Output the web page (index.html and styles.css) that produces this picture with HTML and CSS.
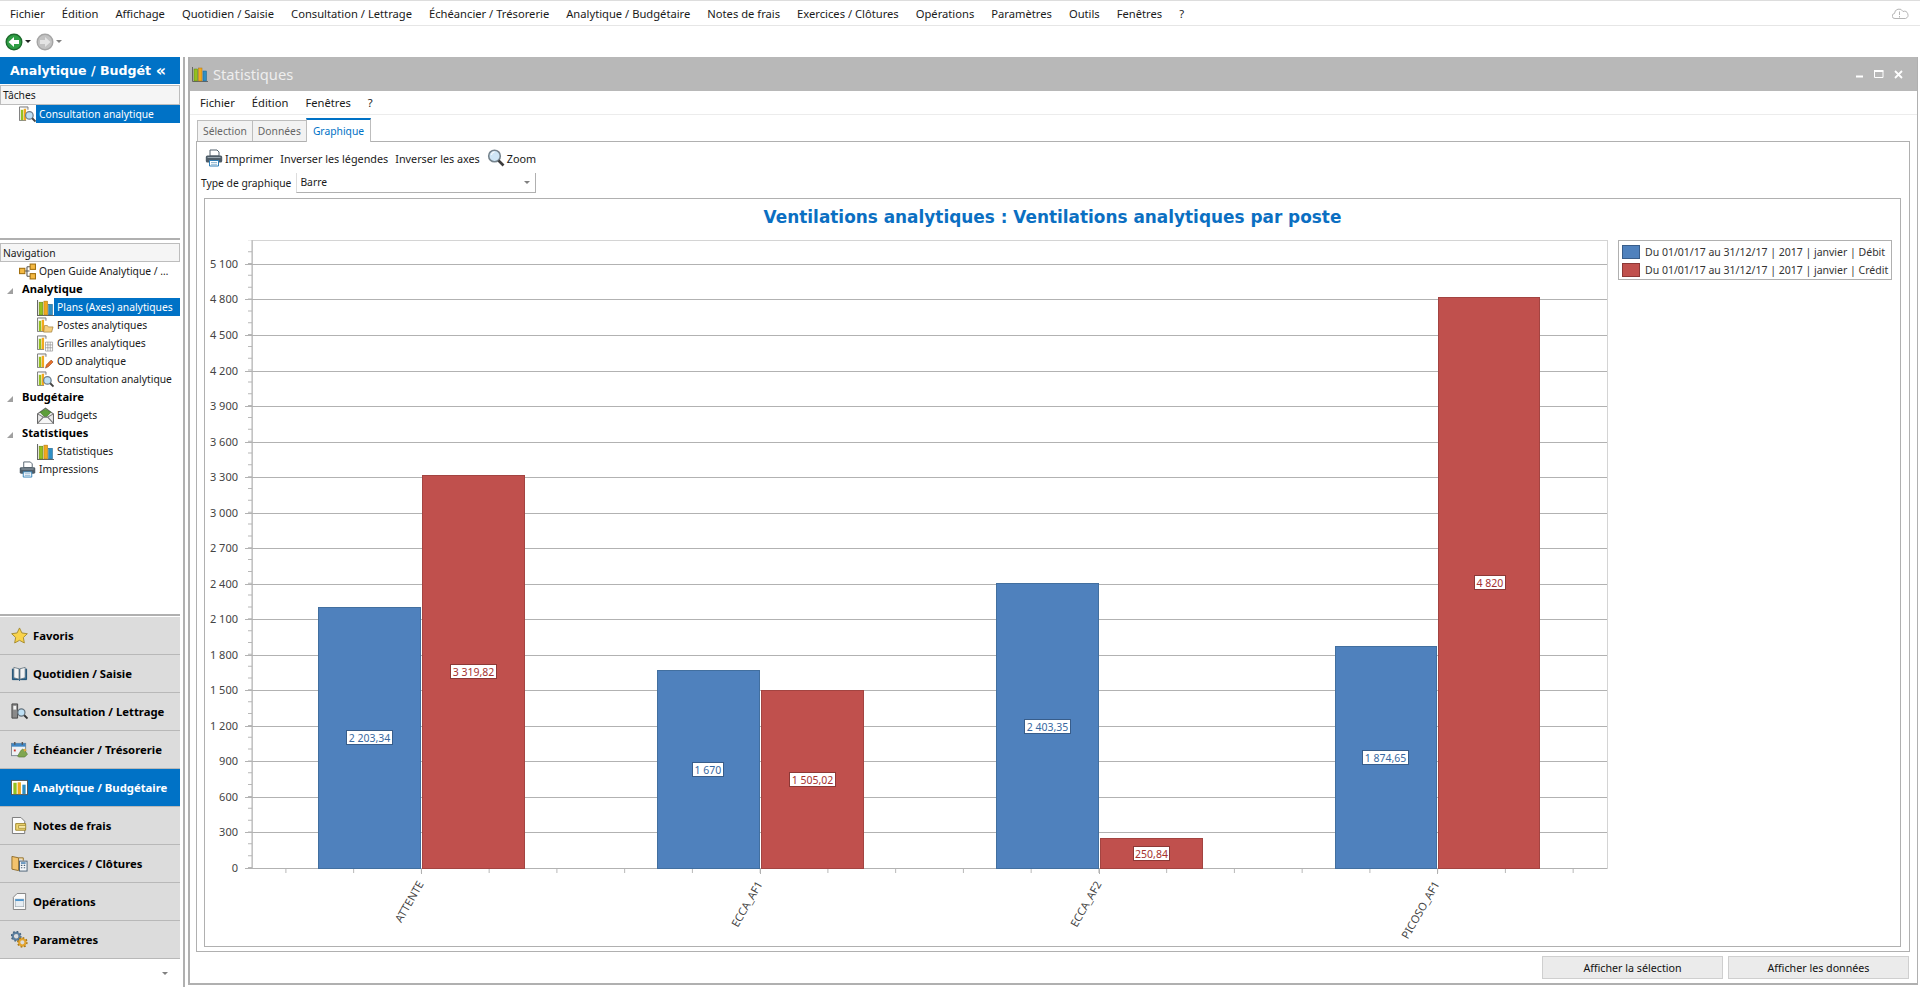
FILE: index.html
```html
<!DOCTYPE html>
<html lang="fr">
<head>
    <meta charset="utf-8">
    <title>Statistiques</title>
    <link rel="stylesheet" href="styles.css">
</head>
<body>
    <!-- Icons -->
    <svg class="sprite" xmlns="http://www.w3.org/2000/svg">
        <symbol id="i-bars" viewBox="0 0 16 16">
            <path d="M.5 1v14.5H16" fill="none" stroke="#666"/>
            <rect x="2" y="3" width="3.5" height="12" fill="#94c11f" stroke="#5d7f10" stroke-width=".5"/>
            <rect x="6.5" y="2" width="3.5" height="13" fill="#f2a81d" stroke="#a87410" stroke-width=".5"/>
            <rect x="11" y="5" width="3.5" height="10" fill="#2f8fc4" stroke="#1c6189" stroke-width=".5"/>
        </symbol>
        <symbol id="i-bars-base" viewBox="0 0 16 16">
            <path d="M.5 1h9v3M.5 1v14.5h7" fill="#eee" stroke="#777"/>
            <rect x="2" y="4" width="2.5" height="11" fill="#94c11f"/>
            <rect x="5" y="3" width="2.5" height="12" fill="#f2a81d"/>
        </symbol>
        <symbol id="i-bars-search" viewBox="0 0 18 18">
            <use href="#i-bars-base" width="16" height="16"/>
            <circle cx="11" cy="10" r="4" fill="#bfe0f5" stroke="#6d7c88" stroke-width="1.3"/>
            <path d="M14 13l3.5 3.5" stroke="#444" stroke-width="2"/>
        </symbol>
        <symbol id="i-bars-folder" viewBox="0 0 18 18">
            <use href="#i-bars-base" width="16" height="16"/>
            <path d="M8 9h3l1 1.5h5l-1.5 5.5H7z" fill="#f5cf7e" stroke="#9c7a32" stroke-width=".7"/>
        </symbol>
        <symbol id="i-bars-grid" viewBox="0 0 18 18">
            <use href="#i-bars-base" width="16" height="16"/>
            <path d="M9 7.5h7.5V17H9zM9 10.500h7.5M9 13.500h7.5M11.500 7.500V17M14 7.500V17" fill="#fff" stroke="#8a8a8a" stroke-width=".7"/>
        </symbol>
        <symbol id="i-bars-pen" viewBox="0 0 18 18">
            <use href="#i-bars-base" width="16" height="16"/>
            <path d="M9 16l1-3.500 5-5 2 2-5 5z" fill="#e8702a" stroke="#8d3f12" stroke-width=".6"/>
        </symbol>
        <symbol id="i-guide" viewBox="0 0 16 16">
            <path d="M5 7.500h5M7.500 3.500v9M7.500 3.500h3M7.500 12.500h3" fill="none" stroke="#555"/>
            <rect x=".5" y="5" width="5" height="5" fill="#f5b942" stroke="#a2700f"/>
            <rect x="10.500" y="1" width="5" height="5" fill="#f5b942" stroke="#a2700f"/>
            <rect x="10.500" y="10" width="5" height="5" fill="#f5b942" stroke="#a2700f"/>
        </symbol>
        <symbol id="i-mail" viewBox="0 0 16 16">
            <path d="M.5 6.500L8 1l7.500 5.500v9H.5z" fill="#e9e9e9" stroke="#666"/>
            <path d="M3 5l5-3 5 3-5 5z" fill="#5d9e3a" stroke="#3a6f20" stroke-width=".6"/>
            <path d="M.5 15.500L6 9.500h4l5.500 6M.5 6.500L6 9.500M15.500 6.500L10 9.500" fill="#f6f6f6" stroke="#777"/>
        </symbol>
        <symbol id="i-print" viewBox="0 0 18 18">
            <path d="M5 1h7l2 2v4H5z" fill="#fff" stroke="#54636f"/>
            <rect x=".8" y="6.500" width="16.400" height="7" rx="1.500" fill="#4f5d68"/>
            <path d="M2.500 8.500h13" stroke="#9aa7b0"/>
            <path d="M4.500 11.500h9V17h-9z" fill="#fff" stroke="#2f7fb8"/>
            <path d="M6 13.500h6M6 15.300h6" stroke="#7aa8c8" stroke-width=".8"/>
        </symbol>
        <symbol id="i-zoom" viewBox="0 0 18 18">
            <circle cx="7.500" cy="7" r="5.800" fill="#cfe6f6" stroke="#75838d" stroke-width="1.600"/>
            <path d="M4.500 6a3 3 0 0 1 3-3" fill="none" stroke="#fff"/>
            <path d="M11.500 11.500l5 5" stroke="#3d3d3d" stroke-width="2.600"/>
        </symbol>
        <symbol id="i-star" viewBox="0 0 18 18">
            <path d="M9 1l2.500 5.300 5.800.8-4.200 4 1 5.800L9 14.100l-5.100 2.800 1-5.800-4.200-4 5.800-.8z" fill="#f9d34c" stroke="#a58a2d"/>
        </symbol>
        <symbol id="i-book" viewBox="0 0 18 18">
            <path d="M1.500 4v11.500H8l1 1 1-1h6.500V4" fill="#2e6f9e" stroke="#1e4c6e"/>
            <path d="M3 2.500l5.500 1.500v11L3 13.500zM15 2.500L9.500 4v11l5.500-1.500z" fill="#f3f3f3" stroke="#5a6a75" stroke-width=".8"/>
        </symbol>
        <symbol id="i-binder" viewBox="0 0 18 18">
            <path d="M1 1h6v15H1z" fill="#8a8a8a" stroke="#444"/>
            <rect x="2.500" y="3" width="3" height="4" fill="#f4f4f4"/>
            <circle cx="11" cy="10" r="3.800" fill="#bfe0f5" stroke="#64727c" stroke-width="1.300"/>
            <path d="M14 13l3.500 3.500" stroke="#333" stroke-width="2"/>
        </symbol>
        <symbol id="i-calendar" viewBox="0 0 18 18">
            <rect x=".5" y="2.500" width="15" height="13" fill="#eef1f4" stroke="#7b8793"/>
            <rect x=".5" y="2.500" width="15" height="3.500" fill="#3f86c4"/>
            <path d="M4 1v3M12 1v3" stroke="#555" stroke-width="1.500"/>
            <rect x="3" y="9" width="2" height="2" fill="#c8382f"/>
            <path d="M7 16l3.500-6 2-1.500 2 1.500 3 4-3 3H8z" fill="#7fa650" stroke="#4e6f2c" stroke-width=".6"/>
            <path d="M13 9l2-1 1.500 2-2 1.500z" fill="#e2a93f"/>
        </symbol>
        <symbol id="i-bars-white" viewBox="0 0 18 18">
            <rect x=".5" y="1.500" width="17" height="15" fill="#fff" stroke="#555"/>
            <rect x="2.500" y="4" width="3.500" height="12" fill="#94c11f"/>
            <rect x="7" y="3.500" width="3.500" height="12.500" fill="#f2a81d"/>
            <rect x="12" y="6" width="3.500" height="10" fill="#2f8fc4"/>
        </symbol>
        <symbol id="i-note" viewBox="0 0 18 18">
            <path d="M1.500.5h9l4 4v13h-13z" fill="#fbfbfb" stroke="#777"/>
            <path d="M5 7h10.500v7H5z" fill="#f1d772" stroke="#9b8327"/>
            <path d="M8 9h7.500v3H8z" fill="#f8e9a8" stroke="#9b8327" stroke-width=".7"/>
        </symbol>
        <symbol id="i-year" viewBox="0 0 18 18">
            <path d="M1 1.500l7 1.500v13.500l-7-1.500z" fill="#f3c36d" stroke="#8f6d2c"/>
            <path d="M8 3h5v3" fill="#fbe3ad" stroke="#8f6d2c"/>
            <rect x="9" y="6.500" width="8" height="10.500" fill="#f5f7fa" stroke="#4a6075"/>
            <path d="M10.500 8.500h5" stroke="#3a76ab" stroke-width="1.500"/>
            <path d="M10.500 11h1.500M13.500 11H15M10.500 13.500h1.500M13.500 13.500H15" stroke="#4a6075" stroke-width="1.200"/>
        </symbol>
        <symbol id="i-oper" viewBox="0 0 18 18">
            <path d="M2.500 4.500l4-4h9v17h-13z" fill="#fafafa" stroke="#7f7f7f"/>
            <rect x="4.500" y="6.500" width="9" height="8" fill="#e7edf2" stroke="#9aa7b0" stroke-width=".7"/>
            <rect x="4.500" y="6.500" width="9" height="2" fill="#4f95cc"/>
        </symbol>
        <symbol id="i-gears" viewBox="0 0 18 18">
            <circle cx="5.500" cy="5.500" r="3.600" fill="none" stroke="#5d7f9e" stroke-width="2.400"/>
            <circle cx="5.500" cy="5.500" r="5" fill="none" stroke="#41627f" stroke-width="1.500" stroke-dasharray="1.800 2.100"/>
            <circle cx="12" cy="12" r="3.400" fill="none" stroke="#e3a42d" stroke-width="2.400"/>
            <circle cx="12" cy="12" r="4.900" fill="none" stroke="#a87410" stroke-width="1.500" stroke-dasharray="1.800 2"/>
        </symbol>
    </svg>

    <!-- Main menu -->
    <nav class="menubar">
        <span>Fichier</span>
        <span>Édition</span>
        <span>Affichage</span>
        <span>Quotidien / Saisie</span>
        <span>Consultation / Lettrage</span>
        <span>Échéancier / Trésorerie</span>
        <span>Analytique / Budgétaire</span>
        <span>Notes de frais</span>
        <span>Exercices / Clôtures</span>
        <span>Opérations</span>
        <span>Paramètres</span>
        <span>Outils</span>
        <span>Fenêtres</span>
        <span>?</span>
        <svg class="cloud" width="17" height="11" viewBox="0 0 17 11">
            <path d="M4 10.500H3a2.500 2.500 0 0 1-.5-5A4.500 4.500 0 0 1 11 3.500a3.500 3.500 0 0 1 2.500 7z" fill="none" stroke="#b5b5b5"/>
            <path d="M7.500 3.500v3.500M7.500 8v1.500" stroke="#b5b5b5"/>
        </svg>
    </nav>

    <div class="toolbar">
        <svg class="nav-btn" width="18" height="18" viewBox="0 0 18 18">
            <circle cx="9" cy="9" r="7.800" fill="#2f9e44" stroke="#1d6a2c" stroke-width="1.400"/>
            <path d="M3.500 9L9 4v3h5v4H9v3z" fill="#fff"/>
        </svg>
        <span class="caret caret-dark"></span>
        <svg class="nav-btn nav-btn-next" width="18" height="18" viewBox="0 0 18 18">
            <circle cx="9" cy="9" r="7.800" fill="#c2c2c2" stroke="#a5a5a5" stroke-width="1.400"/>
            <path d="M14.500 9L9 4v3H4v4h5v3z" fill="#e4e4e4"/>
        </svg>
        <span class="caret"></span>
    </div>

    <div class="workspace">
        <!-- Left side panel -->
        <aside class="sidebar">
            <div class="side-title">
                <span>Analytique / Budgét</span>
                <span class="collapse">«</span>
            </div>

            <div class="side-tasks">
                <div class="box-head">Tâches</div>
                <div class="row row-top is-selected">
                    <svg class="icon"><use href="#i-bars-search"/></svg>
                    <span class="row-text">Consultation analytique</span>
                </div>
            </div>

            <div class="side-nav">
                <div class="box-head">Navigation</div>
                <div class="row row-top">
                    <svg class="icon"><use href="#i-guide"/></svg>
                    <span class="row-text">Open Guide Analytique / …</span>
                </div>
                <div class="row row-group"><span class="tree-arrow"></span>Analytique</div>
                <div class="row row-sub is-selected">
                    <svg class="icon"><use href="#i-bars"/></svg>
                    <span class="row-text">Plans (Axes) analytiques</span>
                </div>
                <div class="row row-sub">
                    <svg class="icon"><use href="#i-bars-folder"/></svg>
                    <span class="row-text">Postes analytiques</span>
                </div>
                <div class="row row-sub">
                    <svg class="icon"><use href="#i-bars-grid"/></svg>
                    <span class="row-text">Grilles analytiques</span>
                </div>
                <div class="row row-sub">
                    <svg class="icon"><use href="#i-bars-pen"/></svg>
                    <span class="row-text">OD analytique</span>
                </div>
                <div class="row row-sub">
                    <svg class="icon"><use href="#i-bars-search"/></svg>
                    <span class="row-text">Consultation analytique</span>
                </div>
                <div class="row row-group"><span class="tree-arrow"></span>Budgétaire</div>
                <div class="row row-sub">
                    <svg class="icon"><use href="#i-mail"/></svg>
                    <span class="row-text">Budgets</span>
                </div>
                <div class="row row-group"><span class="tree-arrow"></span>Statistiques</div>
                <div class="row row-sub">
                    <svg class="icon"><use href="#i-bars"/></svg>
                    <span class="row-text">Statistiques</span>
                </div>
                <div class="row row-top">
                    <svg class="icon"><use href="#i-print"/></svg>
                    <span class="row-text">Impressions</span>
                </div>
            </div>

            <div class="outlook">
                <div class="outlook-item"><svg class="icon-big"><use href="#i-star"/></svg>Favoris</div>
                <div class="outlook-item"><svg class="icon-big"><use href="#i-book"/></svg>Quotidien / Saisie</div>
                <div class="outlook-item"><svg class="icon-big"><use href="#i-binder"/></svg>Consultation / Lettrage</div>
                <div class="outlook-item"><svg class="icon-big"><use href="#i-calendar"/></svg>Échéancier / Trésorerie</div>
                <div class="outlook-item is-active"><svg class="icon-big"><use href="#i-bars-white"/></svg>Analytique / Budgétaire</div>
                <div class="outlook-item"><svg class="icon-big"><use href="#i-note"/></svg>Notes de frais</div>
                <div class="outlook-item"><svg class="icon-big"><use href="#i-year"/></svg>Exercices / Clôtures</div>
                <div class="outlook-item"><svg class="icon-big"><use href="#i-oper"/></svg>Opérations</div>
                <div class="outlook-item"><svg class="icon-big"><use href="#i-gears"/></svg>Paramètres</div>
            </div>
            <div class="side-foot"><span class="caret"></span></div>
        </aside>

        <div class="splitter"></div>

        <!-- Statistiques window -->
        <main class="window">
            <header class="win-title">
                <svg class="win-icon"><use href="#i-bars"/></svg>
                <span class="win-name">Statistiques</span>
                <div class="win-buttons">
                    <svg width="8" height="8" viewBox="0 0 8 8"><path d="M0 6.500h7" stroke="#fff" stroke-width="2"/></svg>
                    <svg width="10" height="8" viewBox="0 0 10 8"><path d="M.5 1.500H9v6H.5z" fill="none" stroke="#fff"/><path d="M0 1h9.500" stroke="#fff" stroke-width="2"/></svg>
                    <svg width="9" height="9" viewBox="0 0 9 9"><path d="M1 1l7 7M8 1L1 8" stroke="#fff" stroke-width="1.800"/></svg>
                </div>
            </header>

            <nav class="win-menu">
                <span>Fichier</span>
                <span>Édition</span>
                <span>Fenêtres</span>
                <span>?</span>
            </nav>

            <div class="tabs">
                <div class="tab">Sélection</div>
                <div class="tab">Données</div>
                <div class="tab is-active">Graphique</div>
            </div>

            <section class="panel">
                <div class="chart-tools">
                    <span class="tool"><svg class="tool-icon"><use href="#i-print"/></svg>Imprimer</span>
                    <span class="tool">Inverser les légendes</span>
                    <span class="tool">Inverser les axes</span>
                    <span class="tool"><svg class="tool-icon"><use href="#i-zoom"/></svg>Zoom</span>
                </div>

                <div class="chart-type">
                    <label>Type de graphique</label>
                    <div class="combo">Barre<span class="caret"></span></div>
                </div>

                <div class="chart-frame">
                    <h2 class="chart-title">Ventilations analytiques : Ventilations analytiques par poste</h2>
                    <div class="chart-body">
                        <!-- viewBox uses page coordinates -->
                        <svg class="plot" width="1407" height="711" viewBox="205 236 1407 711">
                            <rect class="plot-edge" x="252.500" y="240.500" width="1355" height="628"/>

                            <g class="grid">
                                <path d="M245 264.500H1607M245 299.500H1607M245 335.500H1607M245 371.500H1607M245 406.500H1607M245 442.500H1607M245 477.500H1607M245 513.500H1607M245 548.500H1607M245 584.500H1607M245 619.500H1607M245 655.500H1607M245 690.500H1607M245 726.500H1607M245 761.500H1607M245 797.500H1607M245 832.500H1607"/>
                            </g>
                            <line class="minor" x1="250" y1="868" x2="250" y2="240" stroke-dasharray="1 10.843"/>
                            <line class="minor" x1="285.400" y1="871" x2="1607" y2="871" stroke-dasharray="1 66.750"/>
                            <path class="axis" d="M252 240V869M245 868.500H1607M421.500 868V874M760.500 868V874M1099.500 868V874M1437.500 868V874"/>

                            <g class="y-labels">
                                <text x="238" y="268">5 100</text>
                                <text x="238" y="303">4 800</text>
                                <text x="238" y="339">4 500</text>
                                <text x="238" y="375">4 200</text>
                                <text x="238" y="410">3 900</text>
                                <text x="238" y="446">3 600</text>
                                <text x="238" y="481">3 300</text>
                                <text x="238" y="517">3 000</text>
                                <text x="238" y="552">2 700</text>
                                <text x="238" y="588">2 400</text>
                                <text x="238" y="623">2 100</text>
                                <text x="238" y="659">1 800</text>
                                <text x="238" y="694">1 500</text>
                                <text x="238" y="730">1 200</text>
                                <text x="238" y="765">900</text>
                                <text x="238" y="801">600</text>
                                <text x="238" y="836">300</text>
                                <text x="238" y="872">0</text>
                            </g>

                            <g class="bars-debit">
                                <rect x="318.500" y="607.500" width="102" height="261"/>
                                <rect x="657.500" y="670.500" width="102" height="198"/>
                                <rect x="996.500" y="583.500" width="102" height="285"/>
                                <rect x="1335.500" y="646.500" width="101" height="222"/>
                            </g>
                            <g class="bars-credit">
                                <rect x="422.500" y="475.500" width="102" height="393"/>
                                <rect x="761.500" y="690.500" width="102" height="178"/>
                                <rect x="1100.500" y="838.500" width="102" height="30"/>
                                <rect x="1438.500" y="297.500" width="101" height="571"/>
                            </g>

                            <g class="tags-debit">
                                <rect x="346.500" y="730.500" width="46" height="14"/><text x="369.500" y="741.500">2 203,34</text>
                                <rect x="692.500" y="762.500" width="31" height="14"/><text x="708" y="773.500">1 670</text>
                                <rect x="1024.500" y="719.500" width="46" height="14"/><text x="1047.500" y="730.500">2 403,35</text>
                                <rect x="1362.500" y="750.500" width="46" height="14"/><text x="1385.500" y="761.500">1 874,65</text>
                            </g>
                            <g class="tags-credit">
                                <rect x="450.500" y="664.500" width="46" height="14"/><text x="473.500" y="675.500">3 319,82</text>
                                <rect x="789.500" y="772.500" width="46" height="14"/><text x="812.500" y="783.500">1 505,02</text>
                                <rect x="1133.500" y="846.500" width="36" height="14"/><text x="1151.500" y="857.500">250,84</text>
                                <rect x="1474.500" y="575.500" width="31" height="14"/><text x="1490" y="586.500">4 820</text>
                            </g>

                            <g class="x-labels">
                                <text transform="translate(424 884) rotate(-60)">ATTENTE</text>
                                <text transform="translate(763 884) rotate(-60)">ECCA_AF1</text>
                                <text transform="translate(1102 884) rotate(-60)">ECCA_AF2</text>
                                <text transform="translate(1440 884) rotate(-60)">PICOSO_AF1</text>
                            </g>
                        </svg>

                        <div class="legend">
                            <div class="legend-item"><span class="swatch swatch-debit"></span>Du 01/01/17 au 31/12/17 | 2017 | janvier | Débit</div>
                            <div class="legend-item"><span class="swatch swatch-credit"></span>Du 01/01/17 au 31/12/17 | 2017 | janvier | Crédit</div>
                        </div>
                    </div>
                </div>
            </section>

            <div class="win-actions">
                <button type="button">Afficher la sélection</button>
                <button type="button">Afficher les données</button>
            </div>
        </main>
    </div>
</body>
</html>
```

FILE: styles.css
```css
* {
    box-sizing: border-box;
}

html,
body {
    height: 100%;
}

body {
    margin: 0;
    overflow: hidden;
    background-color: #fff;
    color: #1a1a1a;
    font-family: "Noto Sans", Arial, sans-serif;
    font-size: 10.3px;
    display: flex;
    flex-direction: column;
}

.sprite {
    display: none;
}

/* Top bars */
.menubar {
    height: 26px;
    flex: none;
    display: flex;
    align-items: center;
    gap: 17px;
    padding-left: 10px;
    border-top: 1px solid #ddd;
    border-bottom: 1px solid #e6e6e6;
    font-size: 11.2px;
}

.cloud {
    margin-left: auto;
    margin-right: 11px;
}

.toolbar {
    height: 31px;
    flex: none;
    display: flex;
    align-items: center;
    padding-left: 5px;
}

.nav-btn-next {
    margin-left: 5px;
}

.caret {
    display: inline-block;
    width: 0;
    height: 0;
    border-left: 3px solid transparent;
    border-right: 3px solid transparent;
    border-top: 3px solid #808080;
}

.caret-dark {
    border-top-color: #222;
}

.toolbar .caret {
    margin-left: 2px;
}

.workspace {
    flex: 1;
    min-height: 0;
    display: flex;
}

/* Left panel */
.sidebar {
    width: 180px;
    flex: none;
    display: flex;
    flex-direction: column;
}

.side-title {
    height: 27px;
    flex: none;
    display: flex;
    align-items: center;
    justify-content: space-between;
    padding: 0 14px 0 10px;
    background-color: #0072c6;
    color: #fff;
    font-family: "DejaVu Sans", sans-serif;
    font-size: 12.6px;
    font-weight: bold;
    white-space: nowrap;
}

.collapse {
    font-size: 16px;
    line-height: 1;
}

.side-tasks {
    height: 156px;
    flex: none;
    padding-top: 1px;
    border-bottom: 2px solid #b0b0b0;
}

.side-nav {
    flex: 1;
    padding-top: 3px;
}

.box-head {
    display: flex;
    align-items: center;
    padding-left: 2px;
    background-color: #f5f5f5;
    border: 1px solid #bdbdbd;
}

.side-tasks .box-head {
    height: 20px;
}

.side-nav .box-head {
    height: 19px;
}

.row {
    height: 18px;
    display: flex;
    align-items: center;
    white-space: nowrap;
}

.row-top {
    padding-left: 19px;
}

.row-sub {
    padding-left: 37px;
}

.row-group {
    padding-left: 7px;
    padding-bottom: 2px;
    font-weight: bold;
    font-size: 11.2px;
    color: #000;
}

.icon {
    width: 17px;
    height: 17px;
    flex: none;
}

.row-text {
    flex: 1;
    align-self: stretch;
    display: flex;
    align-items: center;
    padding-left: 3px;
}

.row.is-selected .row-text {
    background-color: #0072c6;
    color: #fff;
}

.tree-arrow {
    width: 0;
    height: 0;
    margin-top: 5px;
    margin-right: 9px;
    border-left: 6px solid transparent;
    border-bottom: 6px solid #a0a0a0;
}

.outlook {
    flex: none;
    border-top: 2px solid #b0b0b0;
    padding-top: 1px;
}

.outlook-item {
    height: 38px;
    display: flex;
    align-items: center;
    gap: 5px;
    padding-left: 11px;
    background-color: #dcdcdc;
    border-bottom: 1px solid #b8b8b8;
    font-weight: bold;
    font-size: 11.3px;
    color: #000;
}

.outlook-item.is-active {
    background-color: #0072c6;
    color: #fff;
}

.icon-big {
    width: 17px;
    height: 17px;
    flex: none;
}

.side-foot {
    height: 28px;
    display: flex;
    justify-content: flex-end;
    align-items: center;
    padding-right: 12px;
}

.splitter {
    width: 2px;
    margin-left: 3px;
    margin-right: 3px;
    flex: none;
    background-color: #b0b0b0;
}

/* Statistiques window */
.window {
    flex: 1;
    min-width: 0;
    margin-right: 2px;
    margin-bottom: 2px;
    display: flex;
    flex-direction: column;
    border-left: 2px solid #b0b0b0;
    border-right: 1px solid #b0b0b0;
    border-bottom: 2px solid #b0b0b0;
}

.win-title {
    height: 34px;
    flex: none;
    display: flex;
    align-items: center;
    padding: 0 14px 0 2px;
    background-color: #b8b8b8;
    color: #eee;
    font-size: 14.7px;
}

.win-icon {
    width: 16px;
    height: 16px;
    margin-right: 5px;
}

.win-buttons {
    margin-left: auto;
    display: flex;
    align-items: center;
    gap: 10px;
}

.win-menu {
    height: 24px;
    flex: none;
    display: flex;
    align-items: center;
    gap: 17px;
    padding-left: 10px;
    border-bottom: 1px solid #ececec;
    font-size: 11.2px;
}

.tabs {
    height: 26px;
    flex: none;
    display: flex;
    align-items: flex-end;
    padding-left: 7px;
    color: #666;
}

.tab {
    height: 21px;
    display: flex;
    align-items: center;
    padding: 0 5px;
    background-color: #f2f2f2;
    border: 1px solid #bdbdbd;
    border-bottom: none;
    border-right: none;
}

.tab.is-active {
    height: 24px;
    margin-bottom: -1px;
    padding: 0 6px;
    position: relative;
    background-color: #fff;
    color: #0072c6;
    border-top: 2px solid #0072c6;
    border-right: 1px solid #bdbdbd;
}

.panel {
    flex: 1;
    min-height: 0;
    margin: 0 7px 0 6px;
    display: flex;
    flex-direction: column;
    border: 1px solid #b0b0b0;
}

.chart-tools {
    height: 28px;
    flex: none;
    display: flex;
    align-items: center;
    gap: 7px;
    padding: 4px 0 0 8px;
    font-size: 10.8px;
}

.tool {
    display: flex;
    align-items: center;
    gap: 2px;
}

.tool-icon {
    width: 18px;
    height: 18px;
}

.chart-type {
    height: 28px;
    flex: none;
    display: flex;
    align-items: center;
    gap: 5px;
    padding: 0 0 3px 4px;
}

.combo {
    width: 240px;
    height: 20px;
    display: flex;
    align-items: center;
    justify-content: space-between;
    padding: 0 5px 0 3px;
    border-right: 1px solid #b0b0b0;
    border-bottom: 1px solid #b0b0b0;
    border-left: 1px solid #ddd;
}

.chart-frame {
    flex: 1;
    min-height: 0;
    margin: 0 8px 4px 7px;
    border: 1px solid #b0b0b0;
    display: flex;
    flex-direction: column;
}

.chart-title {
    height: 37px;
    flex: none;
    margin: 0;
    padding-bottom: 2px;
    display: flex;
    align-items: center;
    justify-content: center;
    color: #0b6fc2;
    font-family: "DejaVu Sans", sans-serif;
    font-size: 16.9px;
    font-weight: bold;
}

.chart-body {
    flex: 1;
    min-height: 0;
    display: flex;
    align-items: flex-start;
}

.plot {
    flex: none;
    display: block;
}

.plot-edge {
    fill: none;
    stroke: #d4d4d4;
}

.grid path,
.axis {
    fill: none;
    stroke: #b2b2b2;
}

.minor {
    stroke: #b8b8b8;
    stroke-width: 4;
}

.y-labels text,
.x-labels text {
    fill: #444;
    font-size: 11px;
    text-anchor: end;
}

.bars-debit rect {
    fill: #4f81bd;
    stroke: #426f9f;
}

.bars-credit rect {
    fill: #c0504d;
    stroke: #a34441;
}

.tags-debit rect {
    fill: #fff;
    stroke: #385d8a;
}

.tags-credit rect {
    fill: #fff;
    stroke: #8c3836;
}

.tags-debit text,
.tags-credit text {
    font-size: 10.5px;
    text-anchor: middle;
}

.tags-debit text {
    fill: #37689f;
}

.tags-credit text {
    fill: #a5322f;
}

.legend {
    margin: 4px 0 0 6px;
    width: 274px;
    height: 40px;
    padding: 4px 3px;
    border: 1px solid #b0b0b0;
    display: flex;
    flex-direction: column;
    gap: 4px;
    font-size: 10.5px;
}

.legend-item {
    height: 14px;
    display: flex;
    align-items: center;
    gap: 5px;
    white-space: nowrap;
    color: #333;
}

.swatch {
    width: 18px;
    height: 14px;
    flex: none;
    border: 1px solid;
}

.swatch-debit {
    background-color: #4f81bd;
    border-color: #385d8a;
}

.swatch-credit {
    background-color: #c0504d;
    border-color: #8c3836;
}

.win-actions {
    height: 31px;
    flex: none;
    display: flex;
    justify-content: flex-end;
    align-items: center;
    gap: 5px;
    padding-right: 8px;
}

.win-actions button {
    width: 181px;
    height: 23px;
    padding: 0;
    background-color: #ebebeb;
    border: 1px solid #cfcfcf;
    color: #111;
    font-family: inherit;
    font-size: 10.7px;
}
```
